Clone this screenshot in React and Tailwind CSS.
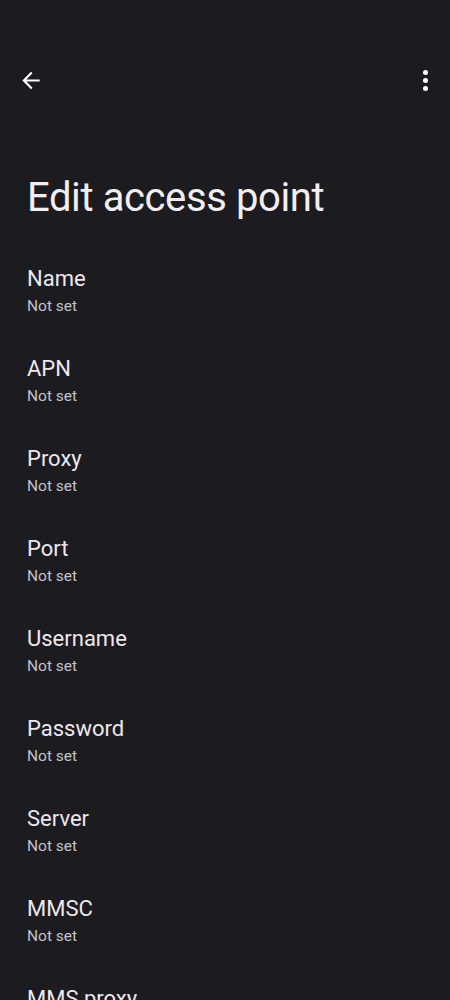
export default function App() {
  const fields = ["Name", "APN", "Proxy", "Port", "Username", "Password", "Server", "MMSC", "MMS proxy"];

  return (
    <div className="h-[1000px] w-[450px] overflow-hidden bg-[#1c1b20] font-['Roboto',sans-serif] text-[#e6e1e6]">
      <div className="flex h-[160px] items-start justify-between pt-[67px]">
        <button className="ml-[18px] flex h-[26px] w-[26px] items-center justify-center">
          <svg viewBox="0 0 24 24" className="h-[27px] w-[27px]" fill="#ffffff">
            <path d="M20 11H7.83l5.59-5.59L12 4l-8 8 8 8 1.41-1.41L7.83 13H20v-2z" />
          </svg>
        </button>
        <div className="mr-[21px] flex h-[26px] w-[8px] flex-col items-center justify-center gap-[3px]">
          <span className="h-[5px] w-[5px] rounded-full bg-white" />
          <span className="h-[5px] w-[5px] rounded-full bg-white" />
          <span className="h-[5px] w-[5px] rounded-full bg-white" />
        </div>
      </div>

      <h1 className="h-[90px] pl-[27px] text-[40px] leading-[76px] font-normal tracking-[-0.4px] text-[#f2eff4]">
        Edit access point
      </h1>

      <div className="flex flex-col">
        {fields.map((f) => (
          <div key={f} className="h-[90px] pl-[27px] pt-[15px]">
            <div className="text-[22px] leading-[28px] text-[#ece8ee]">{f}</div>
            <div className="mt-[3px] text-[15.5px] leading-[20px] text-[#c5c2ca]">Not set</div>
          </div>
        ))}
      </div>
    </div>
  );
}
